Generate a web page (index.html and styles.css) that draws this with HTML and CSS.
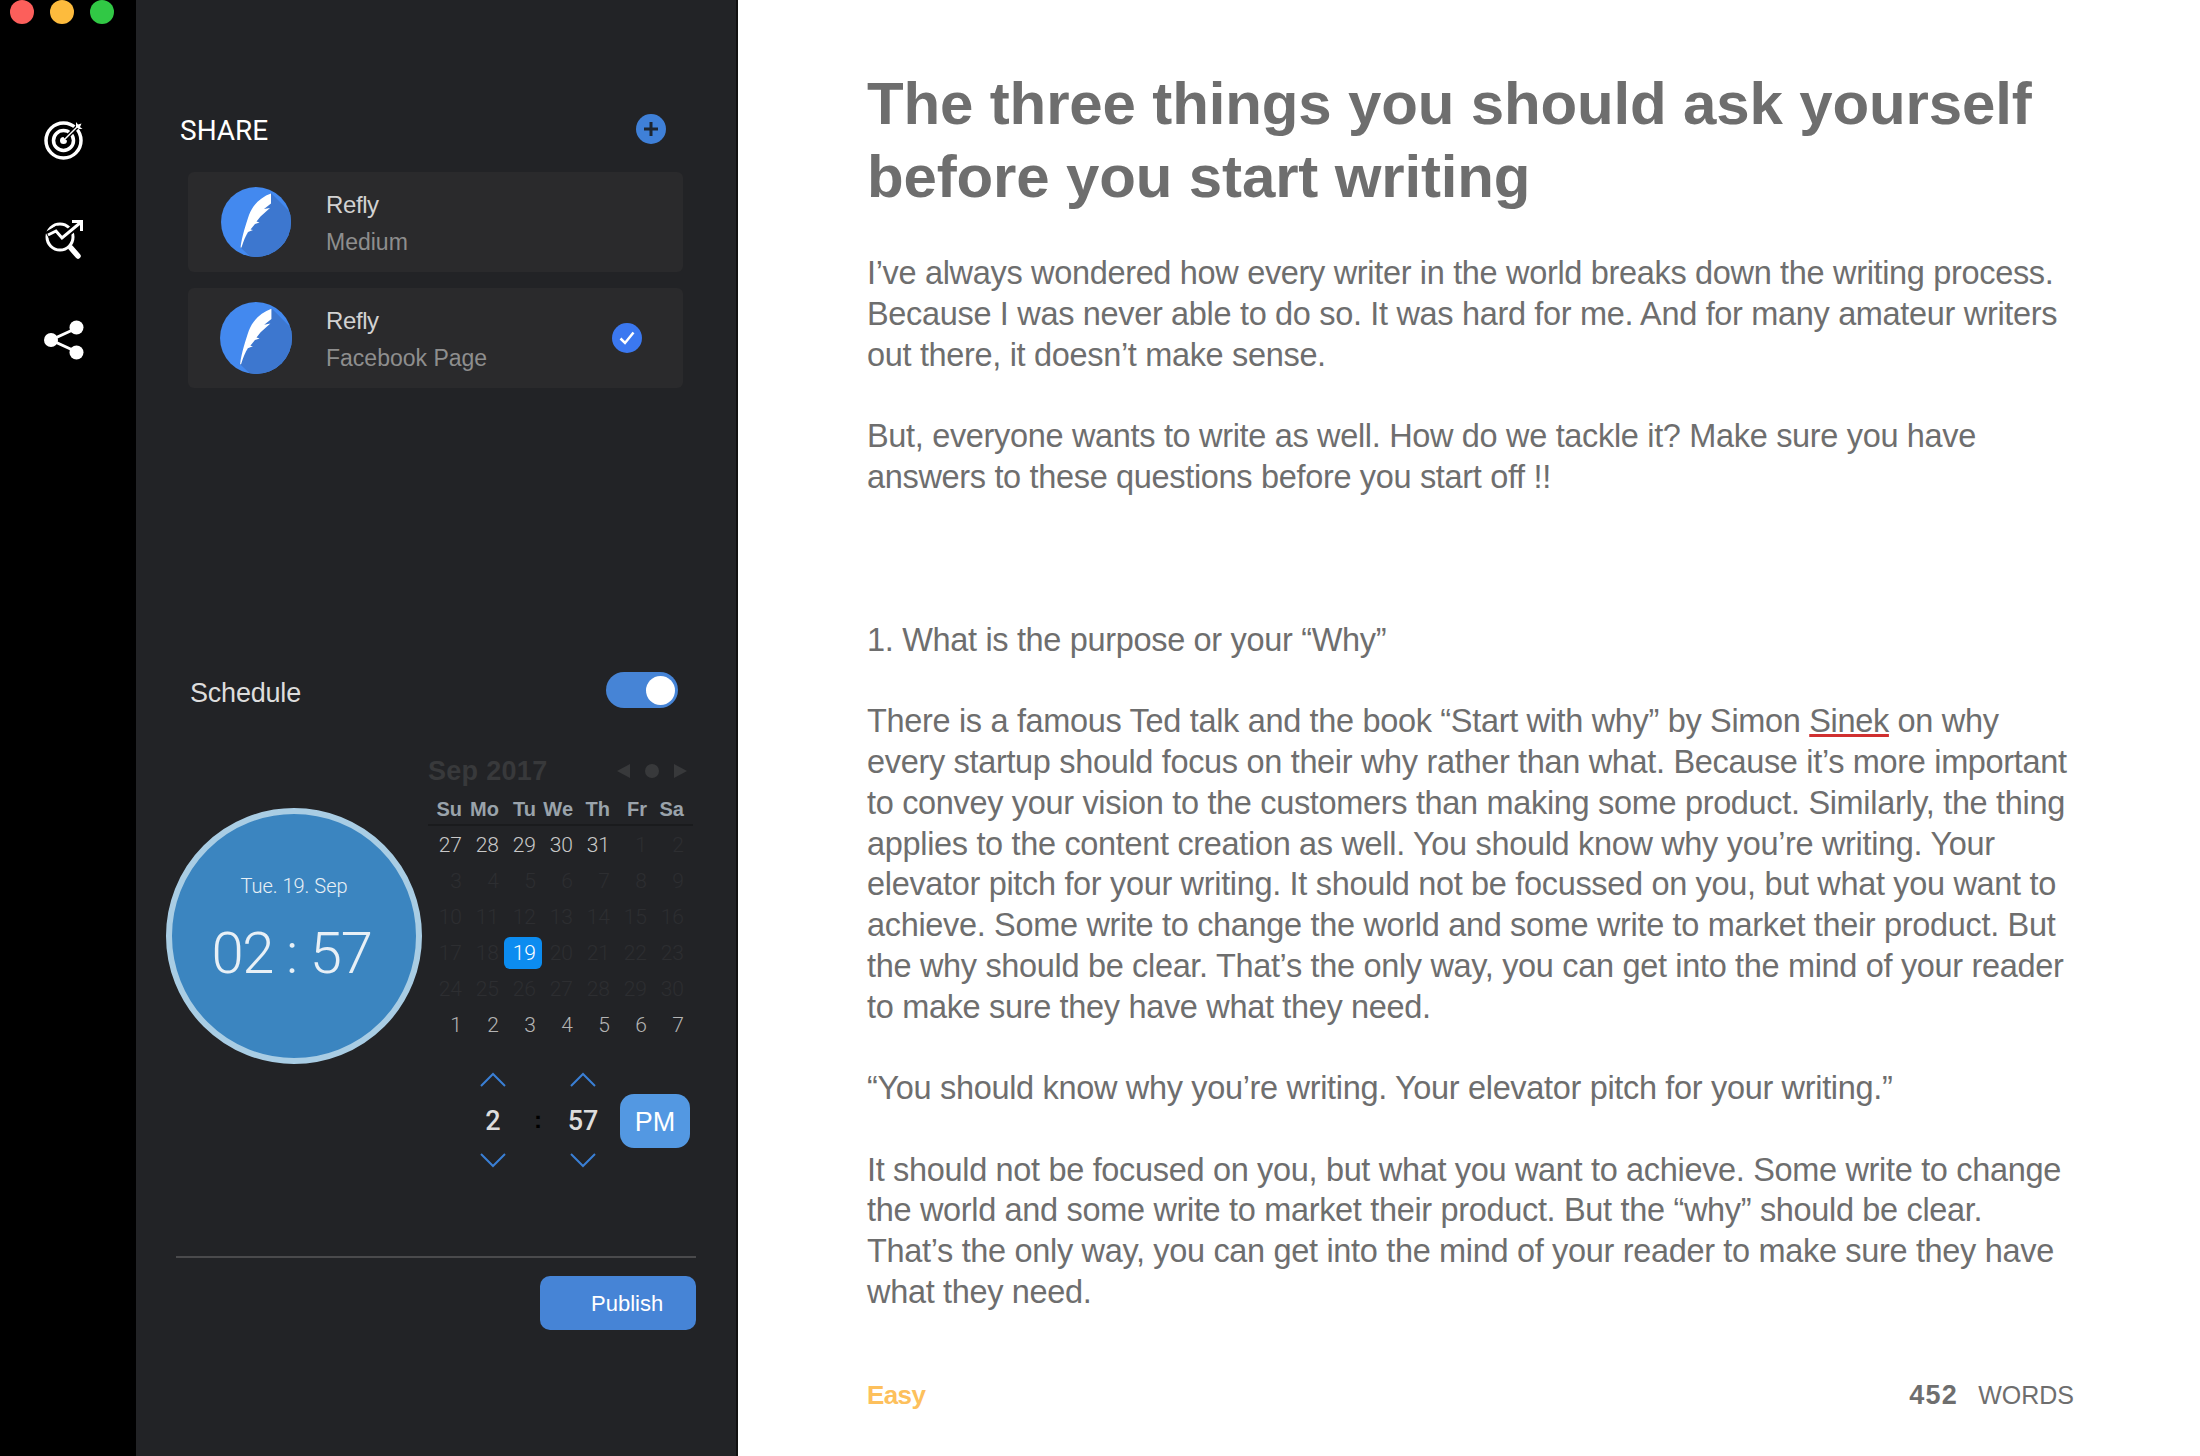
FILE: index.html
```html
<!DOCTYPE html>
<html>
<head>
<link rel="stylesheet" href="styles.css">
</head>
<body>
<svg class="defs" width="0" height="0">
    <symbol id="refly" viewBox="0 0 70 70">
        <rect width="70" height="70" fill="#4389ef"/>
        <polygon points="50,6 76,32 76,76 36,76 19,60" fill="#3d77cf"/>
        <path d="M50 6.500C40 10 31.500 18 28 28C25 37 21 49 19.500 60.500L20.500 60.500C22.500 54 24.500 49 27 45L32 43L29.500 42.500L34 37L38.500 35.500L35.500 34.500L39.500 29.500L49 21L43 22L50 16.500Z" fill="#fff"/>
    </symbol>
</svg>
<div class="app">
    <div class="rail">
        <div class="lights">
            <span class="light red"></span>
            <span class="light yellow"></span>
            <span class="light green"></span>
        </div>
        <svg class="rail-icon" viewBox="0 0 40 40">
            <circle cx="19.500" cy="20.500" r="17.500" fill="none" stroke="#fff" stroke-width="3.500"/>
            <circle cx="19.500" cy="20.500" r="10" fill="none" stroke="#fff" stroke-width="3.500"/>
            <circle cx="19.500" cy="20.500" r="3.500" fill="#fff"/>
            <path d="M21 19L34 6" stroke="#000" stroke-width="4"/>
            <path d="M20 20L33 7" stroke="#fff" stroke-width="1.500"/>
            <path d="M32 2L34 4.500L37.500 3.500L36 7L38.500 9L35 9L32 7Z" fill="#fff"/>
        </svg>
        <svg class="rail-icon" viewBox="0 0 40 40">
            <circle cx="16" cy="17" r="13" fill="none" stroke="#fff" stroke-width="3"/>
            <path d="M27 28L34 36" stroke="#fff" stroke-width="5.500" stroke-linecap="round"/>
            <path d="M3 15L12 10L18 18L37 2" fill="none" stroke="#000" stroke-width="7"/>
            <path d="M4 15L12 11L18 18L36 3" fill="none" stroke="#fff" stroke-width="3"/>
            <path d="M28 1.500H37.500V11" fill="none" stroke="#fff" stroke-width="3"/>
        </svg>
        <svg class="rail-icon" viewBox="0 0 40 40">
            <path d="M33 8L7 20L33 32" fill="none" stroke="#fff" stroke-width="3"/>
            <circle cx="7" cy="20" r="7" fill="#fff"/>
            <circle cx="32.500" cy="7.500" r="7" fill="#fff"/>
            <circle cx="32.500" cy="32.500" r="7" fill="#fff"/>
        </svg>
    </div>

    <div class="panel">
        <div class="share-head">
            <span class="share-title">SHARE</span>
            <svg class="round-icon" viewBox="0 0 30 30">
                <circle cx="15" cy="15" r="15" fill="#3f80d8"/>
                <path d="M15 8V22M8 15H22" stroke="#1d2530" stroke-width="3"/>
            </svg>
        </div>

        <div class="card">
            <svg class="avatar"><use href="#refly"/></svg>
            <div class="card-text">
                <div class="card-name">Refly</div>
                <div class="card-sub">Medium</div>
            </div>
        </div>
        <div class="card card-second">
            <svg class="avatar avatar-big"><use href="#refly"/></svg>
            <div class="card-text">
                <div class="card-name">Refly</div>
                <div class="card-sub">Facebook Page</div>
            </div>
            <svg class="check" viewBox="0 0 30 30">
                <circle cx="15" cy="15" r="15" fill="#3b78f0"/>
                <path d="M8.500 15.500L13 20L21.500 9.500" fill="none" stroke="#fff" stroke-width="2.500"/>
            </svg>
        </div>

        <div class="schedule-row">
            <span class="schedule-label">Schedule</span>
            <span class="toggle"><span class="knob"></span></span>
        </div>

        <div class="scheduler">
            <div class="clock">
                <div class="clock-date">Tue. 19. Sep</div>
                <div class="clock-time">02 : 57</div>
            </div>
            <div class="calendar">
                <div class="cal-head">
                    <span class="cal-title">Sep 2017</span>
                    <span class="cal-nav">
                        <span class="tri tri-left"></span>
                        <span class="dot"></span>
                        <span class="tri tri-right"></span>
                    </span>
                </div>
                <div class="cal-grid cal-week">
                    <span>Su</span><span>Mo</span><span>Tu</span><span>We</span><span>Th</span><span>Fr</span><span>Sa</span>
                </div>
                <div class="cal-grid cal-days">
                    <span>27</span><span>28</span><span>29</span><span>30</span><span>31</span><span class="off">1</span><span class="off">2</span>
                    <span class="off">3</span><span class="off">4</span><span class="off">5</span><span class="off">6</span><span class="off">7</span><span class="off">8</span><span class="off">9</span>
                    <span class="off">10</span><span class="off">11</span><span class="off">12</span><span class="off">13</span><span class="off">14</span><span class="off">15</span><span class="off">16</span>
                    <span class="off">17</span><span class="off">18</span><span class="today">19</span><span class="off">20</span><span class="off">21</span><span class="off">22</span><span class="off">23</span>
                    <span class="off">24</span><span class="off">25</span><span class="off">26</span><span class="off">27</span><span class="off">28</span><span class="off">29</span><span class="off">30</span>
                    <span class="next">1</span><span class="next">2</span><span class="next">3</span><span class="next">4</span><span class="next">5</span><span class="next">6</span><span class="next">7</span>
                </div>
                <div class="spinner">
                    <div class="spin">
                        <svg class="chev" viewBox="0 0 26 15"><path d="M1 14L13 2L25 14"/></svg>
                        <span class="spin-value">2</span>
                        <svg class="chev" viewBox="0 0 26 15"><path d="M1 1L13 13L25 1"/></svg>
                    </div>
                    <span class="spin-colon">:</span>
                    <div class="spin">
                        <svg class="chev" viewBox="0 0 26 15"><path d="M1 14L13 2L25 14"/></svg>
                        <span class="spin-value">57</span>
                        <svg class="chev" viewBox="0 0 26 15"><path d="M1 1L13 13L25 1"/></svg>
                    </div>
                    <span class="ampm">PM</span>
                </div>
            </div>
        </div>

        <div class="divider"></div>
        <div class="publish-row">
            <span class="publish">Publish</span>
        </div>
    </div>

    <div class="main">
        <h1>The three things you should ask yourself<br>before you start writing</h1>
        <p>I’ve always wondered how every writer in the world breaks down the writing process.<br>Because I was never able to do so. It was hard for me. And for many amateur writers<br>out there, it doesn’t make sense.</p>
        <p class="gap-big">But, everyone wants to write as well. How do we tackle it? Make sure you have<br>answers to these questions before you start off !!</p>
        <p>1. What is the purpose or your “Why”</p>
        <p>There is a famous Ted talk and the book “Start with why” by Simon <span class="typo">Sinek</span> on why<br>every startup should focus on their why rather than what. Because it’s more important<br>to convey your vision to the customers than making some product. Similarly, the thing<br>applies to the content creation as well. You should know why you’re writing. Your<br>elevator pitch for your writing. It should not be focussed on you, but what you want to<br>achieve. Some write to change the world and some write to market their product. But<br>the why should be clear. That’s the only way, you can get into the mind of your reader<br>to make sure they have what they need.</p>
        <p>“You should know why you’re writing. Your elevator pitch for your writing.”</p>
        <p>It should not be focused on you, but what you want to achieve. Some write to change<br>the world and some write to market their product. But the “why” should be clear.<br>That’s the only way, you can get into the mind of your reader to make sure they have<br>what they need.</p>
        <div class="foot">
            <span class="level">Easy</span>
            <span class="count"><b>452</b>WORDS</span>
        </div>
    </div>
</div>
</body>
</html>
```

FILE: styles.css
```css
html, body {
    margin: 0;
    padding: 0;
    height: 100%;
    overflow: hidden;
}
body {
    font-family: "Liberation Sans", Arial, sans-serif;
    background: #fff;
}
.defs {
    position: absolute;
}
.app {
    display: flex;
    height: 1456px;
}

/* left rail */
.rail {
    width: 136px;
    flex: none;
    background: #000;
    display: flex;
    flex-direction: column;
}
.lights {
    display: flex;
    gap: 16px;
    padding-left: 10px;
    margin-bottom: 96px;
}
.light {
    width: 24px;
    height: 24px;
    border-radius: 50%;
}
.red { background: #fc5f5b; }
.yellow { background: #fdbb3d; }
.green { background: #31c845; }
.rail-icon {
    width: 40px;
    height: 40px;
    margin: 0 0 60px 44px;
}

/* share panel */
.panel {
    width: 602px;
    flex: none;
    box-sizing: border-box;
    padding-top: 114px;
    background: #222326;
    border-right: 2px solid #111;
}
.share-head {
    display: flex;
    justify-content: space-between;
    align-items: center;
    height: 30px;
    margin-left: 44px;
    width: 486px;
}
.share-title {
    margin-top: 3px;
    font-family: Roboto, sans-serif;
    font-size: 28px;
    line-height: 32px;
    color: #fff;
}
.round-icon {
    width: 30px;
    height: 30px;
}
.card {
    display: flex;
    align-items: center;
    width: 495px;
    height: 100px;
    margin: 28px 0 0 52px;
    background: #2a2a2c;
    border-radius: 6px;
}
.card-second {
    margin-top: 16px;
}
.avatar {
    width: 70px;
    height: 70px;
    margin-left: 33px;
    border-radius: 50%;
    overflow: hidden;
}
.avatar-big {
    width: 72px;
    height: 72px;
    margin-left: 32px;
}
.card-text {
    margin: 3px 0 0 35px;
}
.avatar-big + .card-text {
    margin-left: 34px;
}
.card-name {
    font-size: 24px;
    line-height: 28px;
    letter-spacing: -0.4px;
    color: #d2d2d2;
}
.card-sub {
    font-size: 23px;
    line-height: 28px;
    margin-top: 9px;
    color: #8e8e8e;
}
.check {
    width: 30px;
    height: 30px;
    margin-left: auto;
    margin-right: 41px;
}
.schedule-row {
    display: flex;
    justify-content: space-between;
    align-items: center;
    width: 488px;
    height: 36px;
    margin: 284px 0 0 54px;
}
.schedule-label {
    margin-top: 6px;
    font-size: 27px;
    letter-spacing: -0.2px;
    color: #ddd;
}
.toggle {
    display: flex;
    justify-content: flex-end;
    align-items: center;
    box-sizing: border-box;
    width: 72px;
    height: 36px;
    padding-right: 3px;
    border-radius: 18px;
    background: #4684d6;
}
.knob {
    width: 29px;
    height: 29px;
    border-radius: 50%;
    background: #fff;
}

/* clock and calendar */
.scheduler {
    display: flex;
    align-items: flex-start;
    margin: 48px 0 0 30px;
}
.clock {
    width: 256px;
    height: 256px;
    flex: none;
    box-sizing: border-box;
    margin-top: 52px;
    padding-top: 58px;
    border: 6px solid #a9cde4;
    border-radius: 50%;
    background: #3b85c0;
    color: #e8f0f6;
    text-align: center;
    font-family: Roboto, sans-serif;
    font-weight: 300;
}
.clock-date {
    font-size: 20px;
    line-height: 28px;
}
.clock-time {
    padding-right: 5px;
    font-size: 58px;
    line-height: 68px;
    margin-top: 19px;
    letter-spacing: -1.300px;
}
.calendar {
    width: 268px;
    margin-left: 3px;
}
.cal-head {
    display: flex;
    justify-content: space-between;
    align-items: center;
    height: 30px;
    padding: 0 6px 0 3px;
}
.cal-title {
    font-size: 27px;
    letter-spacing: 0.3px;
    font-weight: bold;
    color: #38393b;
}
.cal-nav {
    display: flex;
    align-items: center;
    gap: 15px;
}
.tri {
    width: 0;
    height: 0;
    border-top: 7px solid transparent;
    border-bottom: 7px solid transparent;
}
.tri-left { border-right: 13px solid #38393b; }
.tri-right { border-left: 13px solid #38393b; }
.dot {
    width: 14px;
    height: 14px;
    border-radius: 50%;
    background: #38393b;
}
.cal-grid {
    display: grid;
    grid-template-columns: repeat(7, 37px);
    justify-content: end;
    padding-right: 9px;
    text-align: right;
}
.cal-week {
    height: 30px;
    margin: 8px 0 1px 3px;
    border-bottom: 2px solid #1a1b1d;
    font-size: 20px;
    font-weight: bold;
    line-height: 30px;
    color: #9aa3ab;
}
.cal-days {
    font-family: Roboto, sans-serif;
    font-weight: 300;
    font-size: 21px;
    line-height: 36px;
    color: #c8c8c8;
}
.off {
    color: #2d2e31;
}
.next {
    color: #b4b4b4;
}
.today {
    margin: 2px -6px 2px 5px;
    padding-right: 6px;
    line-height: 32px;
    border-radius: 6px;
    background: #0c8cf0;
    color: #fff;
}
.spinner {
    display: flex;
    align-items: center;
    margin: 29px 0 0 48px;
}
.spin {
    display: flex;
    flex-direction: column;
    align-items: center;
    justify-content: space-between;
    width: 40px;
    height: 96px;
}
.chev {
    width: 26px;
    height: 15px;
    fill: none;
    stroke: #3a7fd5;
    stroke-width: 2;
}
.spin-value {
    padding-top: 2px;
    font-family: Roboto, sans-serif;
    font-weight: 500;
    font-size: 27px;
    color: #ddd;
}
.spin-colon {
    width: 50px;
    text-align: center;
    font-size: 24px;
    font-weight: bold;
    color: #000;
}
.ampm {
    width: 70px;
    height: 54px;
    margin: 2px 0 0 17px;
    border-radius: 14px;
    background: #5398e2;
    color: #fff;
    font-size: 27px;
    line-height: 56px;
    text-align: center;
}
.divider {
    width: 520px;
    height: 2px;
    margin: 88px 0 0 40px;
    background: #4a4a4c;
}
.publish-row {
    display: flex;
    justify-content: flex-end;
    width: 560px;
    margin-top: 18px;
}
.publish {
    box-sizing: border-box;
    width: 156px;
    height: 54px;
    padding-left: 51px;
    border-radius: 10px;
    background: #4684d6;
    color: #fff;
    font-size: 22px;
    line-height: 56px;
}

/* article */
.main {
    flex: 1;
    padding: 67px 0 0 129px;
    color: #6e6e6e;
}
h1 {
    margin: 0 0 40px;
    font-size: 60px;
    line-height: 73px;
    letter-spacing: -0.140px;
}
p {
    margin: 0 0 40.750px;
    font-size: 32.500px;
    line-height: 40.750px;
    letter-spacing: -0.330px;
}
.gap-big {
    margin-bottom: 122.250px;
}
.typo {
    text-decoration: underline;
    text-decoration-color: #d03030;
}
.foot {
    display: flex;
    justify-content: space-between;
    align-items: baseline;
    width: 1207px;
    margin-top: 67px;
    font-size: 25px;
}
.level {
    font-size: 26px;
    letter-spacing: -0.600px;
    font-weight: bold;
    color: #fdc05c;
}
.count b {
    margin-right: 20px;
    font-size: 27px;
    letter-spacing: 1.300px;
}
```
